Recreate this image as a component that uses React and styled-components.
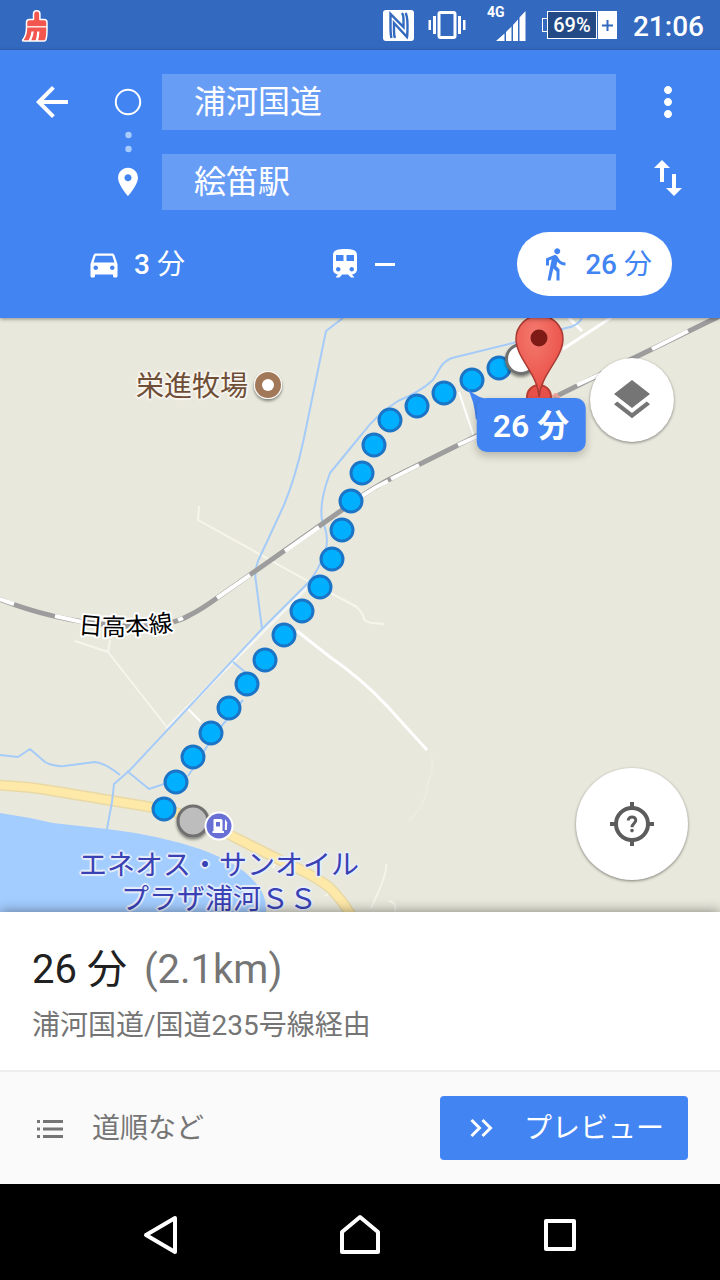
import React from "react";
import styled, { createGlobalStyle } from "styled-components";

const MAP_W = 720;
const MAP_H = 594;

const GlobalStyle = createGlobalStyle`
  *, *::before, *::after { box-sizing: border-box; }
  body {
    margin: 0;
    background: #000;
    font-family: Roboto, "Noto Sans CJK JP", sans-serif;
    color: #212121;
  }
  button, input { font: inherit; color: inherit; }
  button { border: 0; padding: 0; background: none; cursor: pointer; }
  svg { display: block; }
`;

const Screen = styled.div`
  display: flex;
  flex-direction: column;
  min-height: 100vh;
`;

/* Status bar */

const StatusBar = styled.div`
  display: flex;
  align-items: center;
  justify-content: space-between;
  height: 50px;
  padding: 0 16px 0 20px;
  background: #3469c0;
  color: #fff;
`;

const StatusGroup = styled.div`
  display: flex;
  align-items: center;
  gap: 14px;
`;

const Signal = styled.div`
  position: relative;
  margin-left: 4px;
`;

const NetworkType = styled.span`
  position: absolute;
  left: 3px;
  top: -2px;
  font-size: 14px;
  line-height: 14px;
  font-weight: 700;
`;

const Battery = styled.div`
  display: flex;
  align-items: center;
  height: 28px;
  margin: 0 2px;
`;

const BatteryTip = styled.span`
  width: 5px;
  height: 14px;
  border: 1px solid #fff;
  border-right: 0;
`;

const BatteryLevel = styled.span`
  display: grid;
  place-items: center;
  width: 50px;
  height: 28px;
  border: 1px solid #fff;
  background: #244a86;
  font-size: 20px;
  line-height: 24px;
  font-weight: 500;
`;

const BatteryCharge = styled.span`
  display: grid;
  place-items: center;
  width: 19px;
  height: 28px;
  margin-left: 1px;
  background: #fff;
`;

const Clock = styled.time`
  padding-top: 4px;
  font-size: 28px;
  line-height: 32px;
  font-weight: 500;
`;

/* Directions header */

const Header = styled.header`
  position: relative;
  z-index: 2;
  padding: 24px 0 22px;
  background: #4285f2;
  color: #fff;
  box-shadow: 0 1px 4px rgba(0, 0, 0, 0.4);
`;

const RouteForm = styled.form`
  display: flex;
  align-items: flex-start;
  padding: 0 28px;
`;

const IconButton = styled.button`
  display: grid;
  place-items: center;
  width: 48px;
  height: 48px;
`;

const BackColumn = styled.div`
  padding: 4px 28px 0 0;
`;

const MarkerColumn = styled.div`
  display: flex;
  flex-direction: column;
  align-items: center;
  gap: 12px;
  width: 48px;
  margin-right: 10px;
  padding-top: 14px;
`;

const Fields = styled.div`
  flex: 1;
  min-width: 0;
  display: flex;
  flex-direction: column;
  gap: 24px;
`;

const PlaceInput = styled.input`
  width: 100%;
  height: 56px;
  padding: 0 32px 6px;
  border: 0;
  border-radius: 0;
  outline: 0;
  background: #689df6;
  color: #fff;
  font-size: 32px;
  line-height: 48px;
`;

const ActionColumn = styled.div`
  display: flex;
  flex-direction: column;
  gap: 28px;
  padding: 4px 0 0 28px;
`;

const Modes = styled.div`
  display: flex;
  justify-content: space-between;
  margin-top: 22px;
  padding: 0 48px 0 66px;
`;

const ModeButton = styled.button`
  display: flex;
  align-items: center;
  gap: 12px;
  height: 64px;
  padding: 0 20px;
  border-radius: 32px;
  background: ${(p) => (p.$active ? "#fff" : "transparent")};
  color: ${(p) => (p.$active ? "#4285f2" : "#fff")};
  font-size: 28px;
  line-height: 40px;
  font-weight: 500;
`;

const Unit = styled.span`
  font-weight: 400;
`;

const Dash = styled.span`
  width: 20px;
  height: 3px;
  background: currentColor;
`;

/* Map */

const MapArea = styled.main`
  position: relative;
  width: 100%;
  aspect-ratio: ${MAP_W} / ${MAP_H};
  background: #e9e8dc;
`;

const MapDrawing = styled.svg`
  width: 100%;
  height: 100%;
`;

const MapPin = styled.div`
  position: absolute;
  left: ${(p) => (p.$x / MAP_W) * 100}%;
  top: ${(p) => (p.$y / MAP_H) * 100}%;
  transform: translate(-50%, -50%);
  white-space: nowrap;
`;

const PlaceLabel = styled(MapPin)`
  color: ${(p) => p.$color};
  font-size: 28px;
  line-height: 34px;
  text-align: center;
  text-shadow: 2px 0 1px ${(p) => p.$halo}, -2px 0 1px ${(p) => p.$halo},
    0 2px 1px ${(p) => p.$halo}, 0 -2px 1px ${(p) => p.$halo},
    1px 1px 1px ${(p) => p.$halo}, -1px -1px 1px ${(p) => p.$halo},
    1px -1px 1px ${(p) => p.$halo}, -1px 1px 1px ${(p) => p.$halo};
`;

const Callout = styled(MapPin)`
  display: flex;
  align-items: center;
  height: 54px;
  padding: 2px 16px 0;
  border-radius: 10px;
  background: #4285f2;
  color: #fff;
  font-size: 32px;
  line-height: 48px;
  font-weight: 600;
  box-shadow: 0 4px 8px rgba(0, 0, 0, 0.22);
`;

const RoundButton = styled.button`
  position: absolute;
  display: grid;
  place-items: center;
  width: ${(p) => p.$size}px;
  height: ${(p) => p.$size}px;
  border-radius: 50%;
  background: #fff;
  color: #757575;
  box-shadow: 0 1px 3px rgba(0, 0, 0, 0.45);
`;

const LayersButton = styled(RoundButton)`
  top: 40px;
  right: 46px;
`;

const LocateButton = styled(RoundButton)`
  right: 32px;
  bottom: 32px;
`;

/* Bottom sheet */

const Sheet = styled.section`
  position: relative;
  z-index: 1;
  background: #fff;
  box-shadow: 0 0 12px rgba(0, 0, 0, 0.45);
`;

const Summary = styled.div`
  height: 160px;
  padding: 34px 32px 30px;
  border-bottom: 2px solid #eee;
`;

const Duration = styled.h1`
  display: flex;
  gap: 17px;
  margin: 0 0 12px;
  font-size: 40px;
  line-height: 48px;
  font-weight: 400;
`;

const Distance = styled.span`
  color: #757575;
`;

const Via = styled.p`
  margin: 0;
  color: #757575;
  font-size: 28px;
  line-height: 40px;
`;

const SheetActions = styled.div`
  display: flex;
  align-items: center;
  justify-content: space-between;
  height: 112px;
  padding: 0 32px;
  background: #fafafa;
`;

const StepsLink = styled.a`
  display: flex;
  align-items: center;
  gap: 24px;
  color: #757575;
  font-size: 28px;
  line-height: 40px;
  text-decoration: none;
`;

const PreviewButton = styled.button`
  display: flex;
  align-items: center;
  gap: 25px;
  height: 64px;
  padding: 0 24px 0 23px;
  border-radius: 4px;
  background: #4285f2;
  color: #fff;
  font-size: 28px;
  line-height: 40px;
`;

const ActionLabel = styled.span`
  padding-top: 2px;
`;

const SystemNav = styled.nav`
  display: flex;
  justify-content: center;
  gap: 152px;
  padding: 27px 0 21px;
  background: #000;
  color: #fff;
`;

/* Icons */

const Icon = ({ size, d }) => (
  <svg width={size} height={size} viewBox="0 0 24 24" fill="currentColor" aria-hidden="true">
    <path d={d} />
  </svg>
);

const paths = {
  back: "M20 11H7.83l5.59-5.59L12 4l-8 8 8 8 1.41-1.41L7.83 13H20v-2z",
  more: "M12 8c1.1 0 2-.9 2-2s-.9-2-2-2-2 .9-2 2 .9 2 2 2zm0 2c-1.1 0-2 .9-2 2s.9 2 2 2 2-.9 2-2-.9-2-2-2zm0 6c-1.1 0-2 .9-2 2s.9 2 2 2 2-.9 2-2-.9-2-2-2z",
  swap: "M16 17.01V10h-2v7.01h-3L15 21l4-3.99h-3zM9 3L5 6.99h3V14h2V6.99h3L9 3z",
  place: "M12 2C8.13 2 5 5.13 5 9c0 5.25 7 13 7 13s7-7.75 7-13c0-3.87-3.13-7-7-7zm0 9.5c-1.38 0-2.5-1.12-2.5-2.5s1.12-2.5 2.5-2.5 2.5 1.12 2.5 2.5-1.12 2.5-2.5 2.5z",
  car: "M18.92 6.01C18.72 5.42 18.16 5 17.5 5h-11c-.66 0-1.21.42-1.42 1.01L3 12v8c0 .55.45 1 1 1h1c.55 0 1-.45 1-1v-1h12v1c0 .55.45 1 1 1h1c.55 0 1-.45 1-1v-8l-2.08-5.99zM6.5 16c-.83 0-1.5-.67-1.5-1.5S5.67 13 6.5 13s1.5.67 1.5 1.5S7.33 16 6.5 16zm11 0c-.83 0-1.5-.67-1.5-1.5s.67-1.5 1.5-1.5 1.5.67 1.5 1.5-.67 1.5-1.5 1.5zM5 11l1.5-4.5h11L19 11H5z",
  train: "M12 2c-4 0-8 .5-8 4v9.5C4 17.43 5.57 19 7.5 19L6 20.5v.5h2.23l2-2H14l2 2h2v-.5L16.5 19c1.93 0 3.5-1.57 3.5-3.5V6c0-3.5-3.58-4-8-4zM7.5 17c-.83 0-1.5-.67-1.5-1.5S6.67 14 7.5 14s1.5.67 1.5 1.5S8.33 17 7.5 17zm3.5-7H6V6h5v4zm2 0V6h5v4h-5zm3.5 7c-.83 0-1.5-.67-1.5-1.5s.67-1.5 1.5-1.5 1.5.67 1.5 1.5-.67 1.5-1.5 1.5z",
  walk: "M13.5 5.5c1.1 0 2-.9 2-2s-.9-2-2-2-2 .9-2 2 .9 2 2 2zM9.8 8.9L7 23h2.1l1.8-8 2.1 2v6h2v-7.5l-2.1-2 .6-3C14.8 12 16.8 13 19 13v-2c-1.9 0-3.5-1-4.3-2.4l-1-1.6c-.4-.6-1-1-1.7-1-.3 0-.5.1-.8.1L6 8.3V13h2V9.6l1.8-.7",
  layers: "M11.99 18.54l-7.37-5.73L3 14.07l9 7 9-7-1.63-1.27-7.38 5.74zM12 16l7.36-5.73L21 9l-9-7-9 7 1.63 1.27L12 16z",
};

const BrushIcon = () => (
  <svg width="30" height="36" viewBox="0 0 30 36" aria-hidden="true">
    <path
      d="M13.500 12.500V7a3.200 3.200 0 0 1 6.400 0v5.500H24a3 3 0 0 1 3 3V22c0 5-.4 9-1.200 11q-.4 1-1.500 1H3.500q-1.500 0-.6-1.200C5.500 29.500 6.500 26 6.500 21v-5.500a3 3 0 0 1 3-3z"
      fill="#f2564f" stroke="#fff" strokeWidth="1.500" strokeLinejoin="round"
    />
    <path d="M6.500 19.800H27" stroke="#fff" strokeWidth="1.300" />
    <path d="M11.500 24.500q-.5 5-3.200 9.500h2.700q2.300-4.500 2.700-9.500zM17.200 24.500q-.2 5-1.700 9.500h2.500q1.300-4.500 1.400-9.500z" fill="#fff" />
  </svg>
);

const NfcIcon = () => (
  <svg width="31" height="31" viewBox="0 0 31 31" fill="none" aria-hidden="true">
    <rect width="31" height="31" rx="3" fill="#fff" />
    <path d="M8.500 28Q7.500 25 7.500 15.500V4L20.500 17V9Q20.500 5 19 3" stroke="#3469c0" strokeWidth="2.400" />
    <path d="M12 28Q11 26 11 21V13L24 27Q24.500 25 24.500 15.500T22.500 3" stroke="#3469c0" strokeWidth="2.400" />
  </svg>
);

const VibrateIcon = () => (
  <svg width="38" height="30" viewBox="0 0 38 30" fill="#fff" aria-hidden="true">
    <rect x="11" y="2.500" width="16" height="25" rx="1.500" fill="none" stroke="#fff" strokeWidth="3" />
    <path d="M5 6h3v18H5zM0.500 10h2.500v10H.5zM30 6h3v18h-3zM35 10h2.500v10H35z" />
  </svg>
);

const SignalIcon = () => (
  <svg width="42" height="36" viewBox="0 0 42 36" aria-hidden="true">
    <path d="M41.500 4v30h-6V10.500zM34 12.500V34h-5V18zM27.500 19.500V34H22v-9zM20.500 26.500V34H12z" fill="#fff" />
  </svg>
);

const PlusIcon = () => (
  <svg width="13" height="13" viewBox="0 0 13 13" aria-hidden="true">
    <path d="M6.500 1v11M1 6.500h11" stroke="#3469c0" strokeWidth="2" />
  </svg>
);

const OriginMarker = () => (
  <svg width="28" height="65" viewBox="0 0 28 65" aria-hidden="true">
    <circle cx="14" cy="14" r="12.200" fill="none" stroke="#fff" strokeWidth="2" />
    <circle cx="14.500" cy="47" r="3.200" fill="#a6cbfc" />
    <circle cx="14.500" cy="61" r="3.200" fill="#a6cbfc" />
  </svg>
);

const ListIcon = () => (
  <svg width="36" height="36" viewBox="0 0 36 36" fill="#757575" aria-hidden="true">
    <path d="M5 10h3v3H5zM5 17.500h3v3H5zM5 25h3v3H5zM11 10h20v3H11zM11 17.500h20v3H11zM11 25h20v3H11z" />
  </svg>
);

const ChevronsIcon = () => (
  <svg width="36" height="36" viewBox="0 0 36 36" fill="none" stroke="#fff" strokeWidth="3" aria-hidden="true">
    <path d="M8.500 10l8 8-8 8M19.500 10l8 8-8 8" />
  </svg>
);

const LocateIcon = () => (
  <svg width="44" height="44" viewBox="0 0 44 44" fill="none" stroke="#5c5c5c" aria-hidden="true">
    <circle cx="22" cy="22" r="16" strokeWidth="4" />
    <path d="M22 0v6M22 38v6M0 22h6M38 22h6" strokeWidth="4" />
    <path d="M18.200 18.600c0-5 7.600-4.800 7.600-.3 0 3-3.800 3.200-3.800 6.900" strokeWidth="3" />
    <circle cx="22" cy="28.600" r="1.800" fill="#5c5c5c" stroke="none" />
  </svg>
);

const NavIcon = ({ d }) => (
  <svg width="48" height="48" viewBox="0 0 48 48" fill="none" stroke="currentColor" strokeWidth="4" strokeLinejoin="round" aria-hidden="true">
    <path d={d} />
  </svg>
);

/* Map data */

const routeDots = [
  [164, 491], [176, 464], [193, 439], [211, 415], [229, 390], [247, 366], [265, 342],
  [284, 317], [302, 293], [320, 269], [332, 241], [342, 212], [351, 183], [362, 155],
  [374, 127], [390, 102], [417, 88], [444, 75], [472, 62], [499, 50],
];

const rails = [
  "M-6 279L14 286", "M55 298L82 304", "M178 302L183 300", "M217 280L250 257", "M285 233L319 209",
  "M362 178Q375 169 388 163", "M391 161L419 147", "M458 127L480 117",
  "M577 67L603 55", "M652 31L688 13",
];

const railway =
  "M-6 279Q50 302 110 307Q165 312 190 297Q202 291 217 280L342 192Q372 169 400 156L603 55L724 -4";

const streams = [
  "M343 0L326 13L304 120Q296 158 284 187L258 243Q254 254 256 264L262 311",
  "M582 0Q578 8 566 10L513 25L452 40Q444 43 440 50L433 62Q420 74 398 83Q376 97 362 116L330 155Q319 184 322 202Q329 217 326 231Q318 255 306 267L262 311L129 453L114 466L112 484L107 511",
  "M0 437L18 439L30 431L45 444Q54 449 64 448L95 444Q105 445 120 457",
  "M127 453L149 471L164 466",
  "M233 344L245 354", "M188 458L215 416L243 382",
];

const roads = [
  ["M199 188L198 202L306 262L357 289L363 297Q363 304 372 305L384 306", 2, "#f7f6ed"],
  ["M297 313L330 339Q362 361 388 389L427 432", 3, "#fff"],
  ["M431 437Q435 450 428 464Q427 486 408 504", 2, "#edece2"],
  ["M75 323L108 334L166 408M108 334L110 322", 2, "#f7f6ed"],
  ["M309 268L166 411", 3, "#f5f6f2"],
  ["M186 389L201 404", 2, "#fff"],
  ["M459 74L474 119", 2, "#fff"],
  ["M563 31L612 -1M569 0L582 13", 3, "#fff"],
  ["M8 469L29 467L34 472M273 550L278 540", 2, "#f7f6ed"],
  ["M386 546Q388 555 371 590M389 583Q397 584 395 594M325 578L335 571", 2, "#f5f4e9"],
];

const coastRoad =
  "M-4 467Q28 468 60 474L150 489Q188 494 236 520L282 543Q324 562 334 574Q344 585 353 600";

const RouteMap = () => (
  <MapDrawing viewBox={`0 0 ${MAP_W} ${MAP_H}`} preserveAspectRatio="xMidYMid slice" role="img" aria-label="経路の地図">
    <defs>
      <path id="railLabel" d="M78 315Q128 321 184 311" />
      <radialGradient id="pinRed" cx=".4" cy=".25" r=".8">
        <stop offset="0" stopColor="#f47a70" />
        <stop offset="1" stopColor="#e8483e" />
      </radialGradient>
      <filter id="drop" x="-30%" y="-30%" width="160%" height="170%">
        <feDropShadow dx="0" dy="2" stdDeviation="1.500" floodOpacity=".45" />
      </filter>
    </defs>
    <path d="M0 495L30 500L53 505L107 511Q158 517 200 531Q238 545 252 561Q268 577 266 594H0Z" fill="#a3cdff" />
    {roads.map(([d, w, color]) => (
      <path key={d} d={d} fill="none" stroke={color} strokeWidth={w} strokeLinejoin="round" />
    ))}
    <path d={coastRoad} fill="none" stroke="#e8d9a5" strokeWidth="11" />
    <path d={coastRoad} fill="none" stroke="#ffe9a9" strokeWidth="8" />
    {streams.map((d) => (
      <path key={d} d={d} fill="none" stroke="#a5cbf8" strokeWidth="2" strokeLinejoin="round" />
    ))}
    <path d={railway} fill="none" stroke="#9d9d9d" strokeWidth="5" />
    {rails.map((d) => (
      <path key={d} d={d} fill="none" stroke="#fff" strokeWidth="4" />
    ))}
    <text fontSize="24" fill="#000" stroke="#fff" strokeWidth="4" paintOrder="stroke" strokeLinejoin="round">
      <textPath href="#railLabel">日高本線</textPath>
    </text>
    <g filter="url(#drop)">
      <circle cx="268" cy="67" r="14" fill="#fff" />
      <circle cx="268" cy="67" r="13" fill="#a17859" />
      <circle cx="268" cy="67" r="6" fill="#fff" />
    </g>
    {routeDots.map(([x, y]) => (
      <circle key={`${x}-${y}`} cx={x} cy={y} r="11" fill="#00b0ff" stroke="#1b74c5" strokeWidth="3" />
    ))}
    <g filter="url(#drop)" strokeWidth="3">
      <circle cx="521" cy="41" r="14.500" fill="#fff" stroke="#707070" />
      <circle cx="193" cy="503" r="15" fill="#bdbdbd" stroke="#707070" />
    </g>
    <circle cx="219" cy="508" r="14.500" fill="#fff" />
    <circle cx="219" cy="508" r="12.500" fill="#6870d6" />
    <path
      d="M214.500 501h6.500q1.500 0 1.500 1.500V513h1.500v2h-11.500v-2h1v-11q0-1 1-1zM216 504v4.500h4V504z"
      fill="#fff" fillRule="evenodd"
    />
    <path d="M225 501l2.200 3.500-.4 7.500h-2z" fill="#fff" />
    <circle cx="539" cy="79" r="12" fill="#e85149" stroke="#b73c34" strokeWidth="2" />
    <path d="M553 80q1-6 5-3M555 78l5 1" stroke="#f4a49c" strokeWidth="2" fill="none" />
    <path
      d="M539 79C538 56 516 40 516 21a23.500 23.500 0 0 1 47 0C563 40 541 56 539 79z"
      fill="url(#pinRed)" stroke="#a83a33" strokeWidth="1.500"
    />
    <circle cx="539" cy="20" r="8.500" fill="#7e1b16" />
    <path d="M467 70q7 11 9 32l18-20q-17-1-27-12z" fill="#4285f2" />
  </MapDrawing>
);

export default function App() {
  return (
    <>
      <GlobalStyle />
      <Screen>
        <StatusBar>
          <BrushIcon />
          <StatusGroup>
            <NfcIcon />
            <VibrateIcon />
            <Signal>
              <NetworkType>4G</NetworkType>
              <SignalIcon />
            </Signal>
            <Battery>
              <BatteryTip />
              <BatteryLevel>69%</BatteryLevel>
              <BatteryCharge><PlusIcon /></BatteryCharge>
            </Battery>
            <Clock>21:06</Clock>
          </StatusGroup>
        </StatusBar>

        <Header>
          <RouteForm onSubmit={(e) => e.preventDefault()}>
            <BackColumn>
              <IconButton type="button" aria-label="戻る"><Icon size={48} d={paths.back} /></IconButton>
            </BackColumn>
            <MarkerColumn>
              <OriginMarker />
              <Icon size={34} d={paths.place} />
            </MarkerColumn>
            <Fields>
              <PlaceInput aria-label="出発地" defaultValue="浦河国道" />
              <PlaceInput aria-label="目的地" defaultValue="絵笛駅" />
            </Fields>
            <ActionColumn>
              <IconButton type="button" aria-label="その他"><Icon size={48} d={paths.more} /></IconButton>
              <IconButton type="button" aria-label="入れ替え"><Icon size={48} d={paths.swap} /></IconButton>
            </ActionColumn>
          </RouteForm>
          <Modes>
            <ModeButton type="button">
              <Icon size={36} d={paths.car} />
              <ActionLabel>3 <Unit>分</Unit></ActionLabel>
            </ModeButton>
            <ModeButton type="button" aria-label="電車">
              <Icon size={36} d={paths.train} />
              <Dash />
            </ModeButton>
            <ModeButton type="button" $active>
              <Icon size={36} d={paths.walk} />
              <ActionLabel>26 <Unit>分</Unit></ActionLabel>
            </ModeButton>
          </Modes>
        </Header>

        <MapArea>
          <RouteMap />
          <PlaceLabel $x={192} $y={69} $color="#6f4e37" $halo="#f7f5ee">栄進牧場</PlaceLabel>
          <PlaceLabel $x={219} $y={565} $color="#3a41b4" $halo="#e6eefa">
            エネオス・サンオイル<br />プラザ浦河ＳＳ
          </PlaceLabel>
          <Callout $x={531} $y={107}>26 分</Callout>
          <LayersButton type="button" aria-label="レイヤ" $size={84}>
            <Icon size={48} d={paths.layers} />
          </LayersButton>
          <LocateButton type="button" aria-label="現在地" $size={112}>
            <LocateIcon />
          </LocateButton>
        </MapArea>

        <Sheet>
          <Summary>
            <Duration>26 分 <Distance>(2.1km)</Distance></Duration>
            <Via>浦河国道/国道235号線経由</Via>
          </Summary>
          <SheetActions>
            <StepsLink href="#steps">
              <ListIcon />
              <ActionLabel>道順など</ActionLabel>
            </StepsLink>
            <PreviewButton type="button">
              <ChevronsIcon />
              <ActionLabel>プレビュー</ActionLabel>
            </PreviewButton>
          </SheetActions>
        </Sheet>

        <SystemNav>
          <IconButton type="button" aria-label="戻る"><NavIcon d="M39 7v34L10 24z" /></IconButton>
          <IconButton type="button" aria-label="ホーム"><NavIcon d="M6 41V21L24 6l18 15v20z" /></IconButton>
          <IconButton type="button" aria-label="アプリ履歴"><NavIcon d="M10 10h28v28H10z" /></IconButton>
        </SystemNav>
      </Screen>
    </>
  );
}
